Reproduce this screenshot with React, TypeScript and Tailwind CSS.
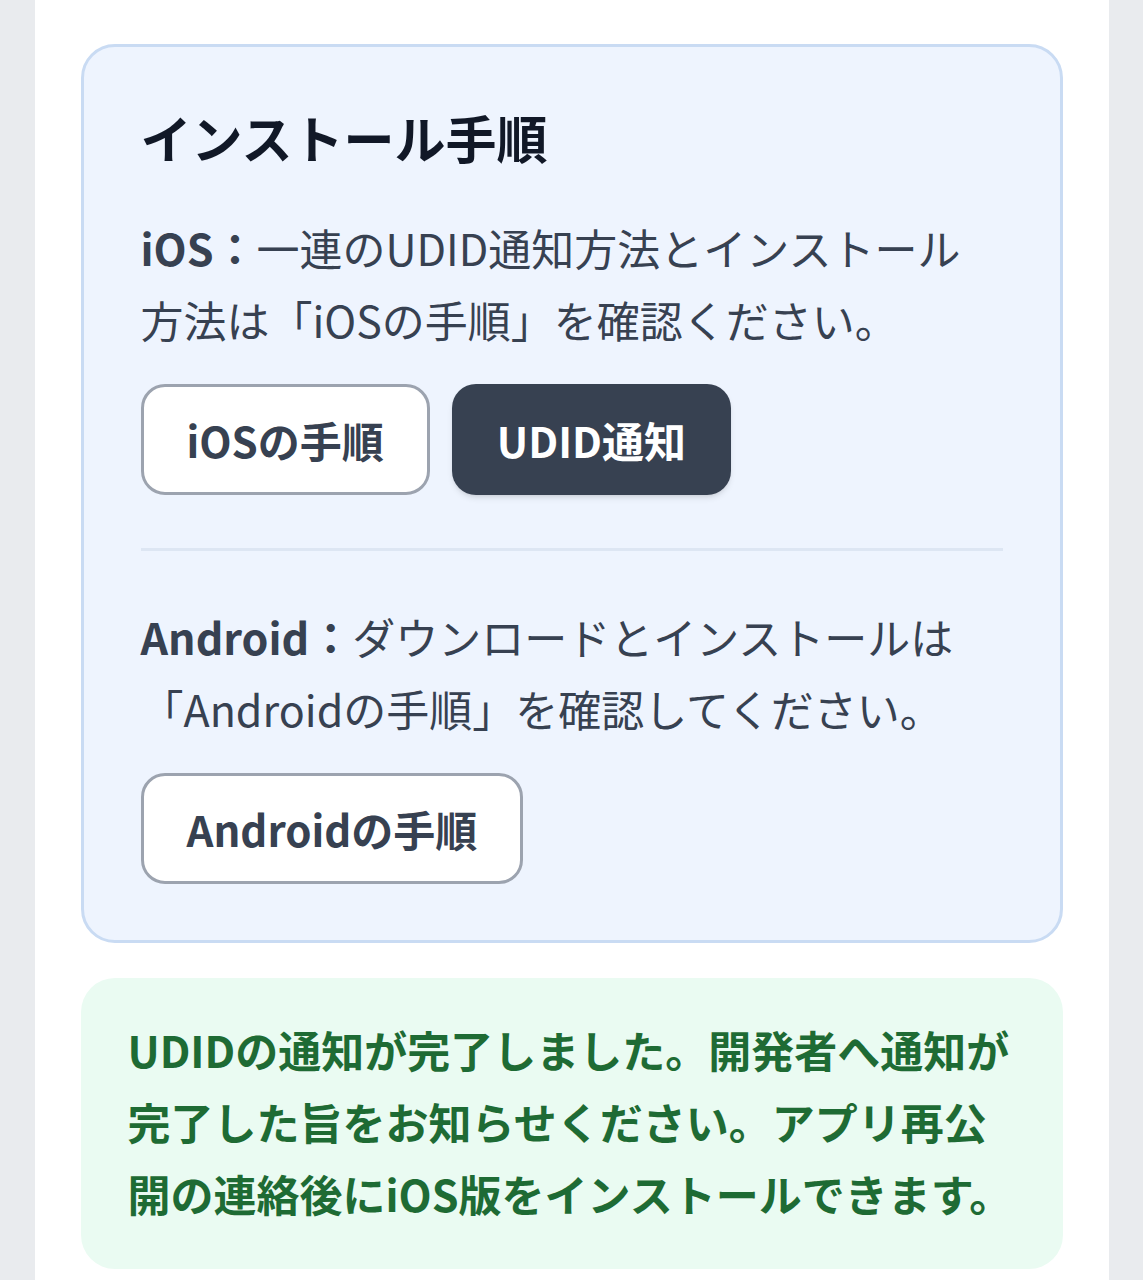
import React from 'react';

const font = { fontFamily: '"Noto Sans CJK JP", "Noto Sans", sans-serif' };

const OutlineButton = ({ label }: { label: string }) => (
  <button className="h-[111px] rounded-[24px] border-[3px] border-[#9ca3af] bg-white px-[43px] text-[42px] font-bold text-[#374151]">
    {label}
  </button>
);

export default function App() {
  return (
    <div className="flex min-h-[1280px] justify-center bg-[#e9ebee]" style={font}>
      <div className="w-[1074px] bg-white px-[46px] pt-[44px]">
        {/* Install steps */}
        <div className="rounded-[34px] border-[3px] border-[#c9dbf3] bg-[#eef4fe] px-[57px] pb-[56px] pt-[54px]">
          <h2 className="text-[51px] font-bold leading-[72px] text-[#111827]">インストール手順</h2>

          <p className="mt-[38px] text-[43px] leading-[72px] text-[#374151]">
            <span className="font-bold">iOS：</span>一連のUDID通知方法とインストール
            <br />
            方法は「iOSの手順」を確認ください。
          </p>
          <div className="mt-[29px] flex gap-[22px]">
            <OutlineButton label="iOSの手順" />
            <button className="h-[111px] rounded-[24px] bg-[#374151] px-[45px] text-[42px] font-bold text-white shadow-md">
              UDID通知
            </button>
          </div>

          <div className="mt-[53px] h-[3px] bg-[#dde6f3]" />

          <p className="mt-[49px] text-[43px] leading-[72px] text-[#374151]">
            <span className="font-bold">Android：</span>ダウンロードとインストールは
            <br />
            「Androidの手順」を確認してください。
          </p>
          <div className="mt-[29px] flex">
            <OutlineButton label="Androidの手順" />
          </div>
        </div>

        {/* Notice */}
        <div className="mt-[35px] rounded-[34px] bg-[#eafbf2] pb-[40px] pl-[47px] pr-[40px] pt-[35px]">
          <p className="text-[43px] font-bold leading-[72px] text-[#1e6b34]">
            UDIDの通知が完了しました。開発者へ通知が
            <br />
            完了した旨をお知らせください。アプリ再公
            <br />
            開の連絡後にiOS版をインストールできます。
          </p>
        </div>
      </div>
    </div>
  );
}
